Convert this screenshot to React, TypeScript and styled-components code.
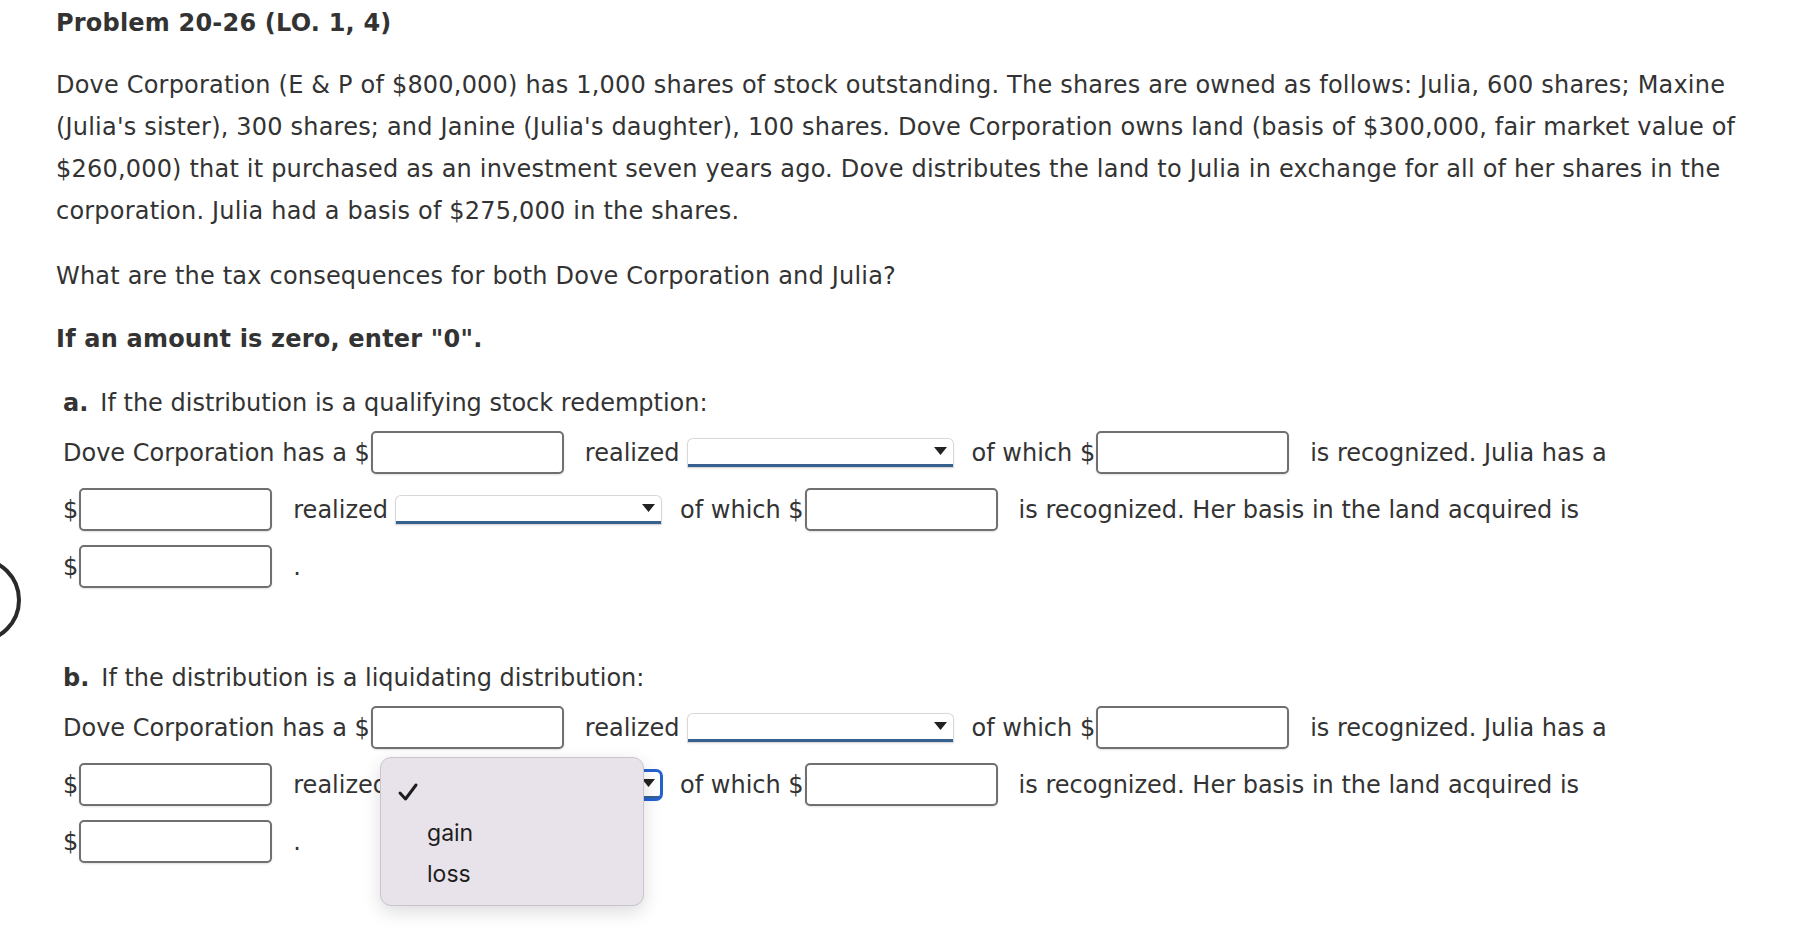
import React from "react";
import styled, { createGlobalStyle } from "styled-components";

const GlobalStyle = createGlobalStyle`
  html, body { margin: 0; padding: 0; background: #ffffff; }
  body {
    font-family: "DejaVu Sans", Verdana, sans-serif;
    color: #333333;
    font-size: 24px;
  }
`;

const Page = styled.div`
  position: relative;
  padding: 8px 40px 40px 56px;
  min-height: 880px;
  overflow: hidden;
`;

const Title = styled.h1`
  margin: 0;
  font-size: 24px;
  font-weight: bold;
  line-height: 30px;
  letter-spacing: 0.2px;
`;

const Para = styled.p<{ $top?: number; $bold?: boolean }>`
  margin: ${(p) => p.$top ?? 22}px 0 0 0;
  line-height: 42px;
  letter-spacing: 0.2px;
  font-weight: ${(p) => (p.$bold ? "bold" : "normal")};
`;

const PartLabel = styled.div<{ $top: number }>`
  margin-top: ${(p) => p.$top}px;
  padding-left: 7px;
  line-height: 42px;
  b { margin-right: 12px; }
`;

const Row = styled.div`
  display: flex;
  align-items: center;
  height: 57px;
  padding-left: 7px;
  white-space: nowrap;
`;

const Text = styled.span`
  display: inline-block;
`;

const Input = styled.span`
  display: inline-block;
  box-sizing: border-box;
  width: 193px;
  height: 43px;
  margin: 0 21px 0 1px;
  border: 2px solid #707070;
  border-radius: 5px;
  background: #fff;
  box-shadow: 0 1px 2px rgba(0, 0, 0, 0.12);
`;

const SelectWrap = styled.span`
  position: relative;
  display: inline-block;
  margin: 0 19px 0 8px;
`;

const SelectBox = styled.span<{ $focus?: boolean }>`
  position: relative;
  display: flex;
  align-items: center;
  justify-content: flex-end;
  box-sizing: border-box;
  width: 265px;
  height: 28px;
  padding-right: 6px;
  background: #fff;
  border-radius: 5px 5px 0 0;
  border-bottom: 3px solid #36618f;
  box-shadow: 0 0 0 1px #d8d8d8, 0 1px 3px rgba(0, 0, 0, 0.15);
  ${(p) =>
    p.$focus
      ? `outline: 3px solid #2462d0; outline-offset: -1px; border-radius: 5px;`
      : ""}
`;

const Arrow = styled.svg`
  width: 13px;
  height: 8px;
  margin-top: -1px;
`;

const Popup = styled.div`
  position: absolute;
  left: -16px;
  top: -14px;
  width: 264px;
  height: 149px;
  box-sizing: border-box;
  background: #e8e3ea;
  border: 1px solid #c9c5cb;
  border-radius: 11px;
  box-shadow: 0 6px 18px rgba(0, 0, 0, 0.14);
  z-index: 5;
  padding-top: 14px;
  font-family: Inter, "Noto Sans", sans-serif;
  font-size: 23px;
  color: #1e1e1e;
`;

const Option = styled.div<{ $check?: boolean }>`
  display: flex;
  align-items: center;
  height: 41px;
  padding-left: ${(p) => (p.$check ? 16 : 46)}px;
`;

const Ring = styled.div`
  position: absolute;
  left: -65px;
  top: 557px;
  width: 78px;
  height: 78px;
  border: 4px solid #2a2a2a;
  border-radius: 50%;
`;

const Check = () => (
  <svg width="22" height="20" viewBox="0 0 22 20">
    <path d="M3 11 L8.5 17 L19 3" fill="none" stroke="#1e1e1e" strokeWidth="3" strokeLinecap="round" strokeLinejoin="round" />
  </svg>
);

const Select: React.FC<{ open?: boolean }> = ({ open }) => (
  <SelectWrap>
    <SelectBox $focus={open}>
      <Arrow viewBox="0 0 13 8">
        <path d="M0 0 H13 L6.5 8 Z" fill="#222" />
      </Arrow>
    </SelectBox>
    {open && (
      <Popup>
        <Option $check>
          <Check />
        </Option>
        <Option>gain</Option>
        <Option>loss</Option>
      </Popup>
    )}
  </SelectWrap>
);

const Part: React.FC<{ label: string; heading: string; top: number; open?: boolean }> = ({
  label,
  heading,
  top,
  open,
}) => (
  <>
    <PartLabel $top={top}>
      <b>{label}</b>
      {heading}
    </PartLabel>
    <Row>
      <Text>Dove Corporation has a $</Text>
      <Input />
      <Text>realized</Text>
      <Select />
      <Text>of which $</Text>
      <Input />
      <Text>is recognized. Julia has a</Text>
    </Row>
    <Row>
      <Text>$</Text>
      <Input />
      <Text>realized</Text>
      <Select open={open} />
      <Text>of which $</Text>
      <Input />
      <Text>is recognized. Her basis in the land acquired is</Text>
    </Row>
    <Row>
      <Text>$</Text>
      <Input />
      <Text>.</Text>
    </Row>
  </>
);

export default function App() {
  return (
    <>
      <GlobalStyle />
      <Page>
        <Ring />
        <Title>Problem 20-26 (LO. 1, 4)</Title>
        <Para $top={26}>
          Dove Corporation (E &amp; P of $800,000) has 1,000 shares of stock outstanding. The shares are owned as
          follows: Julia, 600 shares; Maxine (Julia's sister), 300 shares; and Janine (Julia's daughter), 100
          shares. Dove Corporation owns land (basis of $300,000, fair market value of $260,000) that it purchased
          as an investment seven years ago. Dove distributes the land to Julia in exchange for all of her shares in
          the corporation. Julia had a basis of $275,000 in the shares.
        </Para>
        <Para $top={23}>What are the tax consequences for both Dove Corporation and Julia?</Para>
        <Para $top={21} $bold>
          If an amount is zero, enter "0".
        </Para>
        <Part label="a." heading="If the distribution is a qualifying stock redemption:" top={22} />
        <Part label="b." heading="If the distribution is a liquidating distribution:" top={62} open />
      </Page>
    </>
  );
}
